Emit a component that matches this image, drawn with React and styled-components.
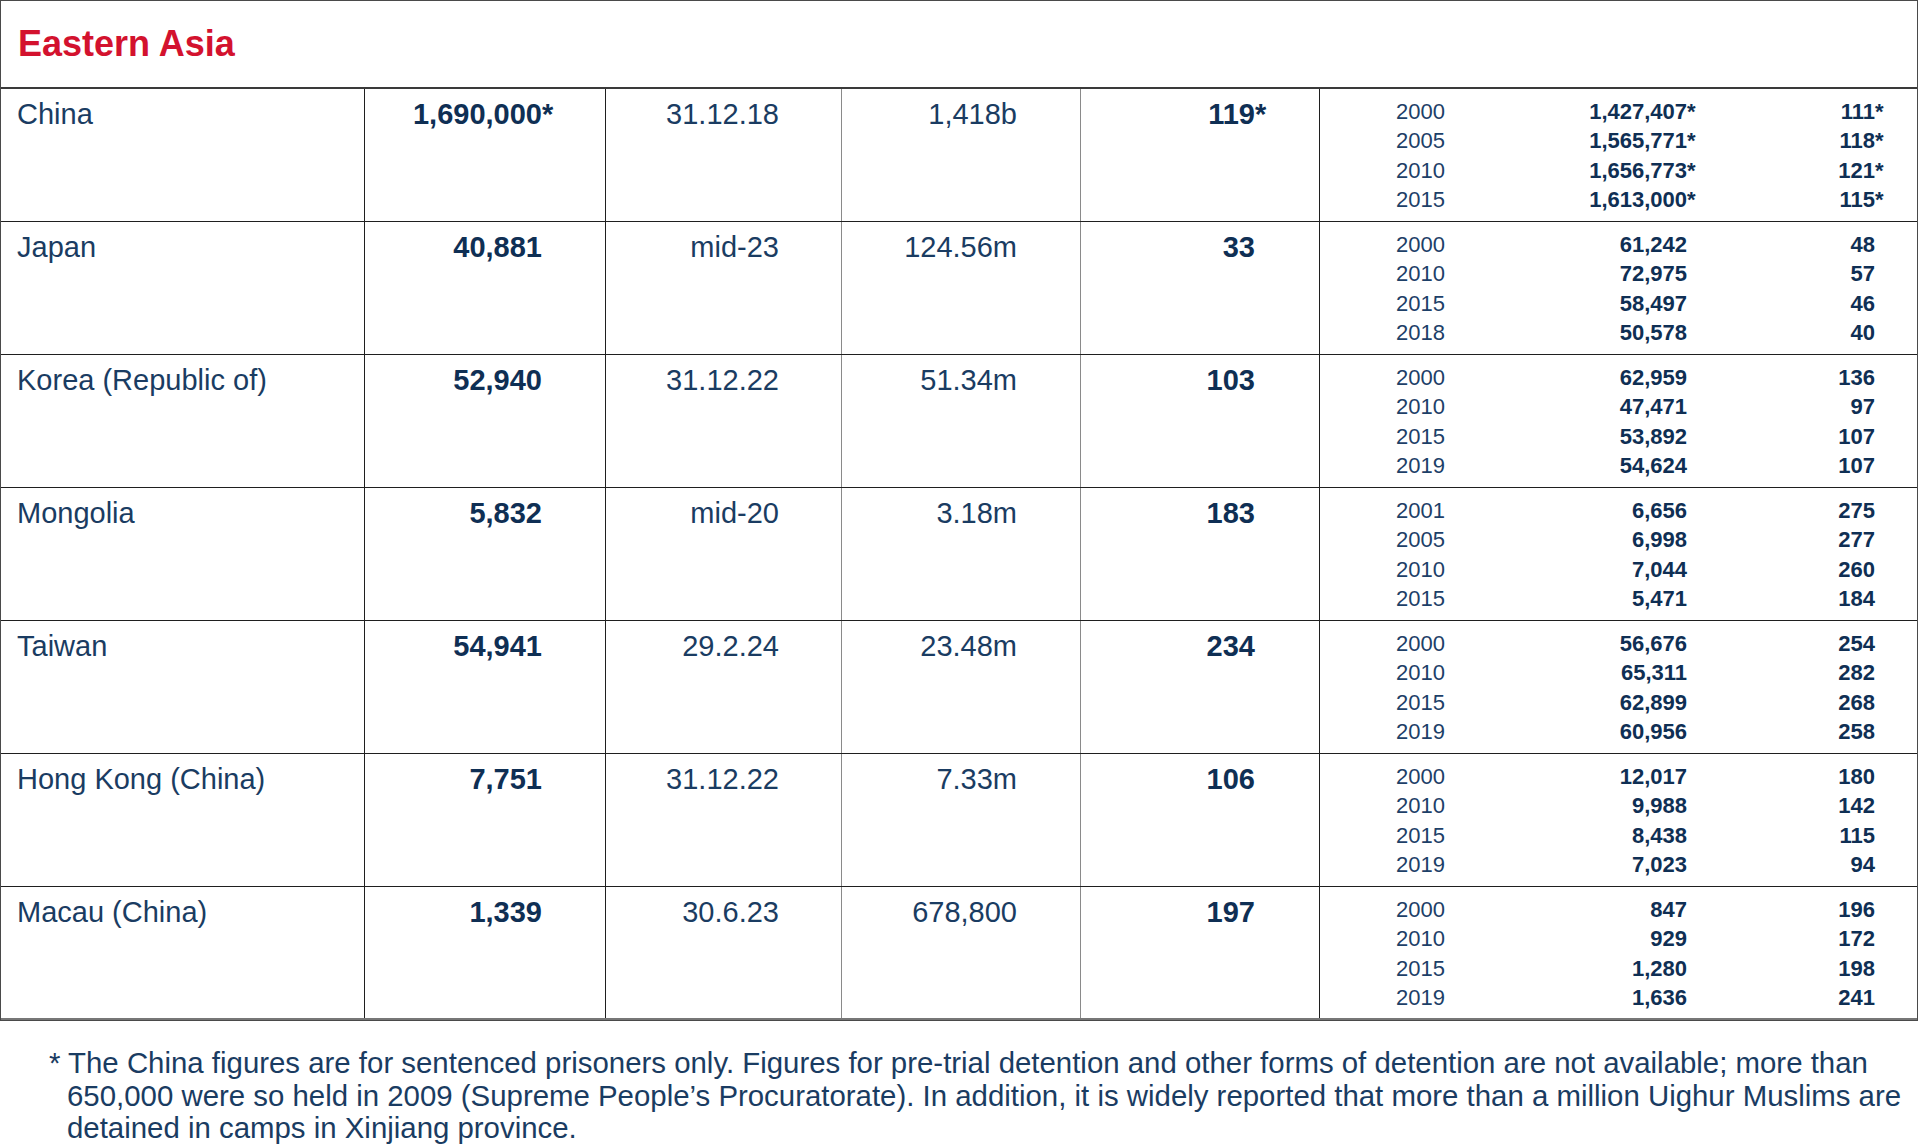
import React from 'react';
import styled, { createGlobalStyle } from 'styled-components';

const GlobalStyle = createGlobalStyle`
  html, body {
    margin: 0;
    padding: 0;
    background: #ffffff;
  }
  body {
    font-family: "Liberation Sans", Arial, sans-serif;
    color: #1a3c62;
  }
`;

const Page = styled.div`
  width: 1920px;
  min-height: 1147px;
  background: #ffffff;
`;

const Table = styled.div`
  width: 1918px;
  border: 1px solid #4a4a4a;
  box-sizing: border-box;
`;

const TitleBar = styled.div`
  height: 88px;
  display: flex;
  align-items: center;
  padding-left: 17px;
  border-bottom: 2px solid #3a3a3a;
  box-sizing: border-box;
`;

const Title = styled.h1`
  margin: 0;
  font-size: 36px;
  font-weight: 700;
  color: #d3122e;
`;

const Row = styled.div`
  display: grid;
  grid-template-columns: 364px 241px 236px 239px 239px 1fr;
  height: 133px;
  border-bottom: ${(p) => (p.$last ? '2px solid #777' : '1.5px solid #1f1f1f')};
  box-sizing: border-box;
`;

const Cell = styled.div`
  border-right: 1px solid ${(p) => (p.$soft ? '#8a8a8a' : '#1f1f1f')};
  padding: 8px ${(p) => p.$pr || 0}px 0 ${(p) => p.$pl || 0}px;
  text-align: ${(p) => p.$align || 'right'};
  font-size: 29px;
  line-height: 34px;
  font-weight: ${(p) => (p.$bold ? 700 : 400)};
  color: ${(p) => (p.$bold ? '#0f2f54' : '#1a3c62')};
  box-sizing: border-box;
  white-space: nowrap;
`;

const TrendCell = styled.div`
  box-sizing: border-box;
`;

const Star = styled.span`
  margin-right: -0.39em;
`;

const Trend = styled.div`
  display: grid;
  grid-template-columns: 130px 161px 188px;
  grid-auto-rows: 29.4px;
  padding: 8px 41px 0 76px;
  font-size: 22px;
  line-height: 29.4px;
  align-content: start;
`;

const Year = styled.span`
  text-align: left;
  color: #1d4068;
`;

const TrendNum = styled.span`
  text-align: right;
  font-weight: 700;
  color: #0f2f54;
  white-space: nowrap;
`;

const Note = styled.p`
  margin: 0;
  padding: 26px 0 0 67px;
  text-indent: -18px;
  font-size: 29.4px;
  line-height: 32.5px;
  color: #1a3c62;
  white-space: nowrap;
`;

const rows = [
  ['China', '1,690,000*', '31.12.18', '1,418b', '119*', [
    ['2000', '1,427,407*', '111*'], ['2005', '1,565,771*', '118*'],
    ['2010', '1,656,773*', '121*'], ['2015', '1,613,000*', '115*']]],
  ['Japan', '40,881', 'mid-23', '124.56m', '33', [
    ['2000', '61,242', '48'], ['2010', '72,975', '57'],
    ['2015', '58,497', '46'], ['2018', '50,578', '40']]],
  ['Korea (Republic of)', '52,940', '31.12.22', '51.34m', '103', [
    ['2000', '62,959', '136'], ['2010', '47,471', '97'],
    ['2015', '53,892', '107'], ['2019', '54,624', '107']]],
  ['Mongolia', '5,832', 'mid-20', '3.18m', '183', [
    ['2001', '6,656', '275'], ['2005', '6,998', '277'],
    ['2010', '7,044', '260'], ['2015', '5,471', '184']]],
  ['Taiwan', '54,941', '29.2.24', '23.48m', '234', [
    ['2000', '56,676', '254'], ['2010', '65,311', '282'],
    ['2015', '62,899', '268'], ['2019', '60,956', '258']]],
  ['Hong Kong (China)', '7,751', '31.12.22', '7.33m', '106', [
    ['2000', '12,017', '180'], ['2010', '9,988', '142'],
    ['2015', '8,438', '115'], ['2019', '7,023', '94']]],
  ['Macau (China)', '1,339', '30.6.23', '678,800', '197', [
    ['2000', '847', '196'], ['2010', '929', '172'],
    ['2015', '1,280', '198'], ['2019', '1,636', '241']]],
];

// trailing asterisks hang past the right edge of the figures
const Fig = ({ v }) =>
  v.endsWith('*') ? <>{v.slice(0, -1)}<Star>*</Star></> : v;

const App = () => (
  <Page>
    <GlobalStyle />
    <Table>
      <TitleBar>
        <Title>Eastern Asia</Title>
      </TitleBar>
      {rows.map(([country, total, date, pop, rate, trend], i) => (
        <Row key={country} $last={i === rows.length - 1}>
          <Cell $align="left" $pl={16}>{country}</Cell>
          <Cell $bold $pr={63}><Fig v={total} /></Cell>
          <Cell $soft $pr={62}>{date}</Cell>
          <Cell $soft $pr={63}>{pop}</Cell>
          <Cell $bold $pr={64}><Fig v={rate} /></Cell>
          <TrendCell>
            <Trend>
              {trend.map(([y, n, r]) => (
                <React.Fragment key={y}>
                  <Year>{y}</Year>
                  <TrendNum><Fig v={n} /></TrendNum>
                  <TrendNum><Fig v={r} /></TrendNum>
                </React.Fragment>
              ))}
            </Trend>
          </TrendCell>
        </Row>
      ))}
    </Table>
    <Note>
      * The China figures are for sentenced prisoners only. Figures for pre-trial detention and other forms of detention are not available; more than<br />
      650,000 were so held in 2009 (Supreme People’s Procuratorate). In addition, it is widely reported that more than a million Uighur Muslims are<br />
      detained in camps in Xinjiang province.
    </Note>
  </Page>
);

export default App;
